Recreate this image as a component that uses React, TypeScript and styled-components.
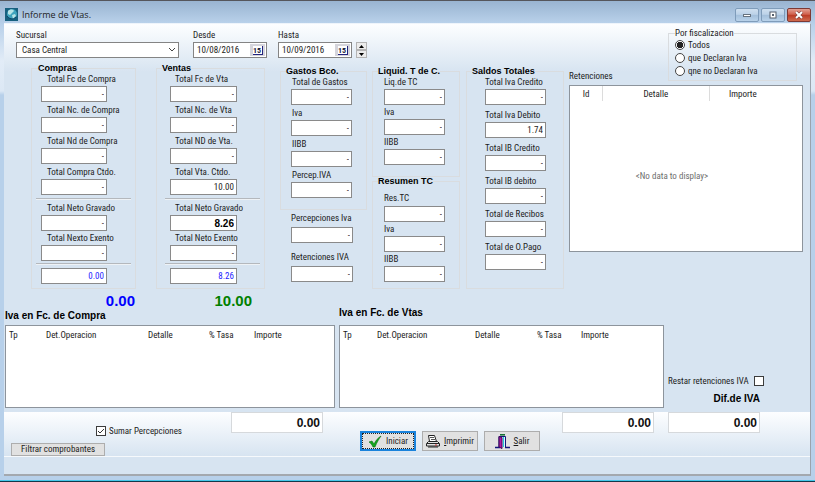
import React, { useId } from "react";
import styled, { createGlobalStyle, css } from "styled-components";

const narrow = `"Roboto Condensed", "Liberation Sans Narrow", "Open Sans Condensed", "Roboto", sans-serif`;
const wide = `"Liberation Sans", Arial, sans-serif`;

const GlobalStyle = createGlobalStyle`
  *, *::before, *::after { box-sizing: border-box; }
  body { margin: 0; background: #b7d0ea; }
  button, input, select, table { font: inherit; color: inherit; }
  button, input, select { margin: 0; border-radius: 0; }
`;

const Window = styled.div`
  min-height: 100vh;
  display: flex;
  flex-direction: column;
  padding: 0 4px 5px;
  border-top: 1px solid #55565c;
  border-bottom: 1px solid #12384a;
  box-shadow: inset 0 -1px #45c8ea;
  background: linear-gradient(#99b4d1 0, #b9d1ea 24px, #e2ecf7 60px, #dce8f5 90px, #b7d0ea 94px);
  font: 9px/14px ${narrow};
  color: #1c1c1c;
`;

const TitleBar = styled.header`
  display: flex;
  align-items: center;
  height: 22px;
  padding: 5px 0 0 1px;
  gap: 4px;
  background: linear-gradient(#99b4d1, #b9d1ea);
`;

const Title = styled.h1`
  flex: 1;
  margin: 0;
  font: 400 9px/14px "Open Sans", sans-serif;
`;

const WindowButton = styled.button<{ $close?: boolean }>`
  display: grid;
  place-items: center;
  width: 24px;
  height: 14px;
  padding: 0;
  margin-left: -2px;
  border: 1px solid ${(p) => (p.$close ? "#7d3934" : "#7f9cba")};
  border-radius: 2px;
  background: ${(p) =>
    p.$close
      ? "linear-gradient(#e2a093, #d0604c 45%, #bb3a24 50%, #cf6a4e)"
      : "linear-gradient(#cfdff0, #bcd2e8 45%, #a3bfdb 50%, #b9d2ea)"};
`;

const Client = styled.main`
  flex: 1;
  display: flex;
  flex-direction: column;
  border-right: 1px solid #9aa3ad;
  border-bottom: 2px solid #a3a8ae;
  border-top: 1px solid #eef4fb;
  background: linear-gradient(#fdfeff, #d7e4f1 48px);
`;

const Upper = styled.div`
  display: flex;
  gap: 5px;
`;

const LeftPane = styled.div`
  flex: none;
`;

const FilterBar = styled.div`
  display: flex;
  align-items: flex-end;
  height: 40px;
  padding: 0 0 6px 12px;
`;

const Stack = styled.div<{ $after?: number }>`
  display: flex;
  flex-direction: column;
  margin-right: ${(p) => p.$after ?? 0}px;
`;

const BranchSelect = styled.select`
  width: 163px;
  height: 16px;
  padding: 0 5px;
  border: 1px solid #848484;
  appearance: none;
  line-height: 14px;
  background: #fff;
`;

const SelectWrap = styled.div`
  position: relative;
  display: flex;
  svg {
    position: absolute;
    right: 3px;
    top: 5px;
    pointer-events: none;
  }
`;

const DateBox = styled.div`
  display: flex;
  align-items: center;
  width: 74px;
  height: 16px;
  padding-right: 1px;
  border: 1px solid #848484;
  background: #fff;
  input {
    flex: 1;
    min-width: 0;
    height: 14px;
    padding: 0 0 0 3px;
    border: 0;
    background: none;
  }
  button {
    width: 15px;
    height: 12px;
    padding: 0;
    border: 0;
    background: #d5d5dc;
  }
`;

const CalendarDay = styled.span`
  display: block;
  width: 10px;
  height: 9px;
  margin: 0 auto;
  border: solid #23237c;
  border-width: 0 1px 1px 0;
  background: #fff;
  font: 700 8px/9px ${narrow};
  color: #23233c;
`;

const Spinner = styled.div`
  display: grid;
  width: 11px;
  height: 16px;
  button {
    display: grid;
    place-items: center;
    padding: 0;
    border: 1px solid #b4b4b4;
    background: #ececec;
  }
`;

const Groups = styled.div`
  display: flex;
  align-items: stretch;
  padding-left: 27px;
`;

const Group = styled.fieldset<{ $w?: number; $inset?: number; $top?: number; $grow?: boolean }>`
  width: ${(p) => (p.$w ? `${p.$w}px` : "auto")};
  min-width: 0;
  margin: 0;
  padding: ${(p) => p.$top ?? 0}px 4px 4px ${(p) => p.$inset ?? 10}px;
  border: 1px solid #d9dcdf;
  ${(p) => p.$grow && css`flex: 1;`}
`;

const Legend = styled.legend<{ $pull?: number }>`
  margin-left: -${(p) => p.$pull ?? 5}px;
  padding: 0;
  font: 700 9px/8px ${wide};
  color: #000;
`;

const Column = styled.div<{ $w: number; $before: number; $drop?: boolean }>`
  display: flex;
  flex-direction: column;
  width: ${(p) => p.$w}px;
  margin-left: ${(p) => p.$before}px;
  padding-top: ${(p) => (p.$drop ? 3 : 0)}px;
`;

const FieldBox = styled.div<{ $gap: number; $lead: number; $indent: number }>`
  display: flex;
  flex-direction: column;
  gap: ${(p) => p.$lead}px;
  margin-bottom: ${(p) => p.$gap}px;
  label {
    padding-left: ${(p) => p.$indent}px;
    white-space: nowrap;
  }
`;

const Amount = styled.input<{ $w: number; $tone?: "blue" | "bold" }>`
  width: ${(p) => p.$w}px;
  height: 16px;
  padding: 0 2px;
  border: 1px solid #8a8a8a;
  background: #fff;
  text-align: right;
  ${(p) => p.$tone === "blue" && css`color: #1d1dff;`}
  ${(p) => p.$tone === "bold" && css`font: 700 10px/14px ${wide}; color: #000;`}
`;

const Divider = styled.hr<{ $end?: boolean }>`
  height: 2px;
  margin: ${(p) => (p.$end ? "2px 0 3px -5px" : "3px 0 1px -5px")};
  border: 0;
  border-top: 1px solid #b4b8bd;
  border-bottom: 1px solid #eef2f6;
`;

const Detached = styled.div`
  padding: 1px 0 0 11px;
`;

const RightPane = styled.div`
  flex: 1;
  min-width: 0;
  display: flex;
  flex-direction: column;
  padding: 4px 7px 0 0;
`;

const RadioGroup = styled.fieldset`
  align-self: flex-end;
  width: 129px;
  min-width: 0;
  height: 53px;
  margin: 0 6px 0 0;
  padding: 0 0 0 6px;
  border: 1px solid #d9dcdf;
  legend {
    padding: 0;
    line-height: 10px;
  }
`;

const Choice = styled.label`
  display: flex;
  align-items: center;
  gap: 3px;
  height: 13px;
`;

const Radio = styled.input`
  appearance: none;
  width: 10px;
  height: 10px;
  border: 1px solid #444;
  border-radius: 50%;
  background: #fff;
  &:checked {
    background: radial-gradient(circle, #222 0 3px, #fff 3px);
  }
`;

const Check = styled.span`
  position: relative;
  display: inline-flex;
  width: 10px;
  height: 10px;
  input {
    appearance: none;
    width: 10px;
    height: 10px;
    border: 1px solid #3c3c3c;
    background: #fff;
  }
  svg {
    position: absolute;
    inset: 0;
    pointer-events: none;
  }
`;

const GridLabel = styled.h2`
  margin: -12px 0 2px;
  font: 400 9px/14px ${narrow};
`;

const GridPanel = styled.div<{ $h: number }>`
  display: flex;
  flex-direction: column;
  height: ${(p) => p.$h}px;
  border: 1px solid #8d949c;
  background: #fff;
`;

const HeadTable = styled.table`
  width: 100%;
  table-layout: fixed;
  border-collapse: collapse;
  th {
    height: 15px;
    padding: 0;
    font-weight: 400;
    white-space: nowrap;
  }
`;

const IvaHead = styled(HeadTable)`
  th {
    height: 17px;
    padding-left: 3px;
    text-align: left;
  }
`;

const RetHead = styled(HeadTable)`
  th + th {
    border-left: 1px solid #dcdcdc;
  }
  th:last-child {
    padding-right: 26px;
  }
`;

const Empty = styled.p`
  flex: 1;
  display: grid;
  place-items: center;
  margin: 0 28px 0 0;
  color: #6d6d6d;
`;

const gridColumns = css`
  display: grid;
  grid-template-columns: minmax(0, 330fr) minmax(0, 325fr) 142px;
  column-gap: 4px;
  padding-left: 1px;
`;

const Lower = styled.div`
  ${gridColumns}
  align-items: end;
  padding-bottom: 4px;
`;

const Totals = styled.div`
  display: flex;
  height: 20px;
`;

const Total = styled.output<{ $w: number; $color: string }>`
  width: ${(p) => p.$w}px;
  font: 700 15px/24px ${wide};
  text-align: right;
  color: ${(p) => p.$color};
`;

const SectionTitle = styled.h2<{ $below: number }>`
  margin: 0 0 ${(p) => p.$below}px;
  font: 700 10px/14px ${wide};
  color: #000;
`;

const Side = styled.div`
  display: flex;
  flex-direction: column;
  gap: 4px;
  padding-bottom: 2px;
`;

const SideCheck = styled.label`
  display: flex;
  align-items: center;
  gap: 5px;
`;

const DifTitle = styled(SectionTitle)`
  width: 92px;
  text-align: right;
`;

const Footer = styled.footer`
  ${gridColumns}
  height: 44px;
  background: linear-gradient(#fdfeff, #d7e4f1);
`;

const FooterCell = styled.div<{ $end: number }>`
  display: flex;
  justify-content: space-between;
  padding-right: ${(p) => p.$end}px;
`;

const Sum = styled.input`
  width: 92px;
  height: 21px;
  padding: 0 2px;
  border: 1px solid #d6d9dc;
  background: #fff;
  font: 700 12px/18px ${wide};
  color: #111;
  text-align: right;
`;

const Options = styled.div`
  display: flex;
  flex-direction: column;
  padding: 12px 0 0 6px;
  gap: 5px;
`;

const SumCheck = styled.label`
  display: flex;
  align-items: center;
  gap: 3px;
  padding-left: 85px;
`;

const FilterButton = styled.button`
  width: 94px;
  height: 13px;
  padding: 0;
  border: 1px solid #adadad;
  background: #e1e1e1;
  line-height: 11px;
  white-space: nowrap;
`;

const Actions = styled.div`
  display: flex;
  gap: 6px;
  padding: 19px 0 0 21px;
`;

const Action = styled.button<{ $primary?: boolean }>`
  display: flex;
  align-items: center;
  justify-content: center;
  gap: 4px;
  width: 56px;
  height: 20px;
  padding: 0;
  border: 1px solid #adadad;
  background: #e1e1e1;
  ${(p) =>
    p.$primary &&
    css`
      border: 2px solid #1a83dc;
      outline: 1px dotted #222;
      outline-offset: -3px;
    `}
`;

const StatusBar = styled.div`
  flex: 1;
  min-height: 16px;
  border-top: 1px solid #f6f9fc;
  background: #d7e4f1;
`;

const GlobeIcon = () => (
  <svg width="13" height="13" viewBox="0 0 13 13" aria-hidden="true">
    <rect width="13" height="13" fill="#17607f" />
    <circle cx="7" cy="6" r="5" fill="#3fa3bd" />
    <path d="M3 3c2-2 5-2 6 0L7 5 5 7 3 6zM7 7l3-1 1 2-3 3z" fill="#b7e3e6" />
    <path d="M2 8c2 3 6 4 9 1" stroke="#0d4468" fill="none" />
  </svg>
);

const CheckIcon = () => (
  <svg width="14" height="13" viewBox="0 0 14 13" aria-hidden="true">
    <path d="M1 7l3-1 2 3C8 5 10 3 13 1c-2 3-4 6-6 11H5C4 10 3 8 1 7z" fill="#12a81d" stroke="#0a6b12" strokeWidth=".6" />
  </svg>
);

const PrinterIcon = () => (
  <svg width="14" height="14" viewBox="0 0 14 14" aria-hidden="true">
    <path d="M3.500 7.500l-1-6h6l2 6z" fill="#fff" stroke="#222" />
    <path d="M4 3.500h4M5 5.500h4" stroke="#555" />
    <path d="M.5 9.500l2-2h9l2 2v2.500H.5z" fill="#e2e2e2" stroke="#222" />
    <path d="M1 9.500h12M2 13h10" stroke="#222" />
    <path d="M9 11h2" stroke="#c33" />
  </svg>
);

const DoorIcon = () => (
  <svg width="15" height="15" viewBox="0 0 15 15" aria-hidden="true">
    <path d="M0 13.500h5M10 13.500h5" stroke="#15157c" strokeWidth="1.500" />
    <path d="M4 13V2.500h6.500V13" fill="#dff6fb" stroke="#15157c" />
    <path d="M4 2.500l3 1v11l-3-1.500z" fill="#b013a8" stroke="#3a0a55" />
    <path d="M8.500 3v10" stroke="#23c3dc" />
    <path d="M5 .8h5" stroke="#0a6b2b" strokeWidth="1.500" />
  </svg>
);

type FieldProps = {
  label: string;
  value?: string;
  w: number;
  gap?: number;
  lead?: number;
  indent?: number;
  tone?: "blue" | "bold";
};

function Field({ label, value = "-", w, gap = 1, lead = 0, indent = 0, tone }: FieldProps) {
  const id = useId();
  return (
    <FieldBox $gap={gap} $lead={lead} $indent={indent}>
      <label htmlFor={id}>{label}</label>
      <Amount id={id} $w={w} $tone={tone} defaultValue={value} />
    </FieldBox>
  );
}

function DateField({ label, value, after }: { label: string; value: string; after: number }) {
  const id = useId();
  return (
    <Stack $after={after}>
      <label htmlFor={id}>{label}</label>
      <DateBox>
        <input id={id} defaultValue={value} />
        <button type="button" aria-label={`Calendario ${label}`}>
          <CalendarDay>15</CalendarDay>
        </button>
      </DateBox>
    </Stack>
  );
}

function IvaGrid({ widths }: { widths: string[] }) {
  const heads = ["Tp", "Det.Operacion", "Detalle", "% Tasa", "Importe"];
  return (
    <GridPanel $h={83}>
      <IvaHead>
        <colgroup>
          {widths.map((w, i) => (
            <col key={i} width={w} />
          ))}
        </colgroup>
        <thead>
          <tr>
            {heads.map((h) => (
              <th key={h} scope="col">{h}</th>
            ))}
          </tr>
        </thead>
      </IvaHead>
    </GridPanel>
  );
}

export default function App() {
  return (
    <>
      <GlobalStyle />
      <Window>
        <TitleBar>
          <GlobeIcon />
          <Title>Informe de Vtas.</Title>
          <WindowButton aria-label="Minimizar">
            <svg width="10" height="8"><rect x="1.500" y="3.500" width="7" height="2" fill="#fff" stroke="#66727f" /></svg>
          </WindowButton>
          <WindowButton aria-label="Maximizar">
            <svg width="10" height="8"><rect x="2" y="1" width="6" height="6" fill="#fff" stroke="#56616e" /><rect x="4" y="3" width="2" height="2" fill="#56616e" /></svg>
          </WindowButton>
          <WindowButton aria-label="Cerrar" $close>
            <svg width="10" height="8"><path d="M2 1l6 6M8 1L2 7" stroke="#6b3a3a" strokeWidth="3" /><path d="M2 1l6 6M8 1L2 7" stroke="#fff" strokeWidth="2" /></svg>
          </WindowButton>
        </TitleBar>
        <Client>
          <Upper>
            <LeftPane>
              <FilterBar>
                <Stack $after={14}>
                  <label htmlFor="sucursal">Sucursal</label>
                  <SelectWrap>
                    <BranchSelect id="sucursal" defaultValue="Casa Central">
                      <option>Casa Central</option>
                    </BranchSelect>
                    <svg width="8" height="6"><path d="M1 1l3 3 3-3" fill="none" stroke="#444" /></svg>
                  </SelectWrap>
                </Stack>
                <DateField label="Desde" value="10/08/2016" after={11} />
                <DateField label="Hasta" value="10/09/2016" after={4} />
                <Spinner>
                  <button aria-label="Mes siguiente"><svg width="5" height="3"><path d="M0 3l2.500-3L5 3z" /></svg></button>
                  <button aria-label="Mes anterior"><svg width="5" height="3"><path d="M0 0l2.500 3L5 0z" /></svg></button>
                </Spinner>
              </FilterBar>
              <Groups>
                <Group $w={105} $inset={9}>
                  <Legend $pull={3}>Compras</Legend>
                  <Field label="Total Fc de Compra" w={66} indent={6} />
                  <Field label="Total Nc. de Compra" w={66} indent={6} />
                  <Field label="Total Nd de Compra" w={66} indent={6} />
                  <Field label="Total Compra Ctdo." w={66} indent={6} />
                  <Divider />
                  <Field label="Total Neto Gravado" w={66} indent={6} gap={0} />
                  <Field label="Total Nexto Exento" w={66} indent={6} gap={0} />
                  <Divider $end />
                  <Amount aria-label="Total Compras" $w={66} $tone="blue" defaultValue="0.00" />
                </Group>
                <Column $w={109} $before={20}>
                  <Group $inset={13} $grow>
                    <Legend $pull={8}>Ventas</Legend>
                    <Field label="Total Fc de Vta" w={67} indent={5} />
                    <Field label="Total Nc. de Vta" w={67} indent={5} />
                    <Field label="Total ND de Vta." w={67} indent={5} />
                    <Field label="Total Vta. Ctdo." w={67} indent={5} value="10.00" />
                    <Divider />
                    <Field label="Total Neto Gravado" w={67} indent={5} gap={0} value="8.26" tone="bold" />
                    <Field label="Total Neto Exento" w={67} indent={5} gap={0} />
                    <Divider $end />
                    <Amount aria-label="Total Ventas" $w={67} $tone="blue" defaultValue="8.26" />
                  </Group>
                </Column>
                <Column $w={87} $before={15} $drop>
                  <Group>
                    <Legend>Gastos Bco.</Legend>
                    <Field label="Total de Gastos" w={61} indent={1} />
                    <Field label="Iva" w={61} indent={1} />
                    <Field label="IIBB" w={61} indent={1} />
                    <Field label="Percep.IVA" w={61} indent={1} gap={7} />
                  </Group>
                  <Detached>
                    <Field label="Percepciones Iva" w={62} lead={2} gap={7} />
                    <Field label="Retenciones IVA" w={62} lead={2} gap={0} />
                  </Detached>
                </Column>
                <Column $w={88} $before={5} $drop>
                  <Group $inset={11}>
                    <Legend $pull={6}>Liquid. T de C.</Legend>
                    <Field label="Liq.de TC" w={61} gap={0} />
                    <Field label="Iva" w={61} gap={0} />
                    <Field label="IIBB" w={61} gap={7} />
                  </Group>
                  <Group $inset={11} $top={6} $grow>
                    <Legend $pull={6}>Resumen TC</Legend>
                    <Field label="Res.TC" w={61} lead={1} gap={0} />
                    <Field label="Iva" w={61} gap={0} />
                    <Field label="IIBB" w={61} gap={0} />
                  </Group>
                </Column>
                <Column $w={98} $before={6} $drop>
                  <Group $inset={18} $grow>
                    <Legend $pull={13}>Saldos Totales</Legend>
                    <Field label="Total Iva Credito" w={61} gap={3} />
                    <Field label="Total Iva Debito" w={61} gap={3} value="1.74" />
                    <Field label="Total IB Credito" w={61} gap={3} />
                    <Field label="Total IB debito" w={61} gap={3} />
                    <Field label="Total de Recibos" w={61} gap={3} />
                    <Field label="Total de O.Pago" w={61} gap={3} />
                  </Group>
                </Column>
              </Groups>
            </LeftPane>
            <RightPane>
              <RadioGroup>
                <legend>Por fiscalizacion</legend>
                <Choice><Radio type="radio" name="fisc" defaultChecked />Todos</Choice>
                <Choice><Radio type="radio" name="fisc" />que Declaran Iva</Choice>
                <Choice><Radio type="radio" name="fisc" />qne no Declaran Iva</Choice>
              </RadioGroup>
              <GridLabel>Retenciones</GridLabel>
              <GridPanel $h={167}>
                <RetHead>
                  <colgroup>
                    <col width="14%" />
                    <col width="46%" />
                    <col width="40%" />
                  </colgroup>
                  <thead>
                    <tr>
                      <th scope="col">Id</th>
                      <th scope="col">Detalle</th>
                      <th scope="col">Importe</th>
                    </tr>
                  </thead>
                </RetHead>
                <Empty>{"<No data to display>"}</Empty>
              </GridPanel>
            </RightPane>
          </Upper>
          <Lower>
            <section>
              <Totals>
                <Total $w={130} $color="#0000ff">0.00</Total>
                <Total $w={117} $color="#008000">10.00</Total>
              </Totals>
              <SectionTitle $below={2}>Iva en Fc. de Compra</SectionTitle>
              <IvaGrid widths={["37", "102", "61", "45", ""]} />
            </section>
            <section>
              <SectionTitle $below={5}>Iva en Fc. de Vtas</SectionTitle>
              <IvaGrid widths={["34", "98", "62", "44", ""]} />
            </section>
            <Side>
              <SideCheck>
                Restar retenciones IVA
                <Check><input type="checkbox" /></Check>
              </SideCheck>
              <DifTitle $below={0}>Dif.de IVA</DifTitle>
            </Side>
          </Lower>
          <Footer>
            <FooterCell $end={12}>
              <Options>
                <SumCheck>
                  <Check>
                    <input type="checkbox" defaultChecked />
                    <svg width="10" height="10"><path d="M2 5l2 2 4-4" fill="none" stroke="#333" /></svg>
                  </Check>
                  Sumar Percepciones
                </SumCheck>
                <FilterButton>Filtrar comprobantes</FilterButton>
              </Options>
              <Sum aria-label="Iva Compra" defaultValue="0.00" />
            </FooterCell>
            <FooterCell $end={10}>
              <Actions>
                <Action $primary><CheckIcon />Iniciar</Action>
                <Action><PrinterIcon /><span><u>I</u>mprimir</span></Action>
                <Action><DoorIcon /><span><u>S</u>alir</span></Action>
              </Actions>
              <Sum aria-label="Iva Ventas" defaultValue="0.00" />
            </FooterCell>
            <FooterCell $end={0}>
              <Sum aria-label="Dif.de IVA" defaultValue="0.00" />
            </FooterCell>
          </Footer>
          <StatusBar />
        </Client>
      </Window>
    </>
  );
}
